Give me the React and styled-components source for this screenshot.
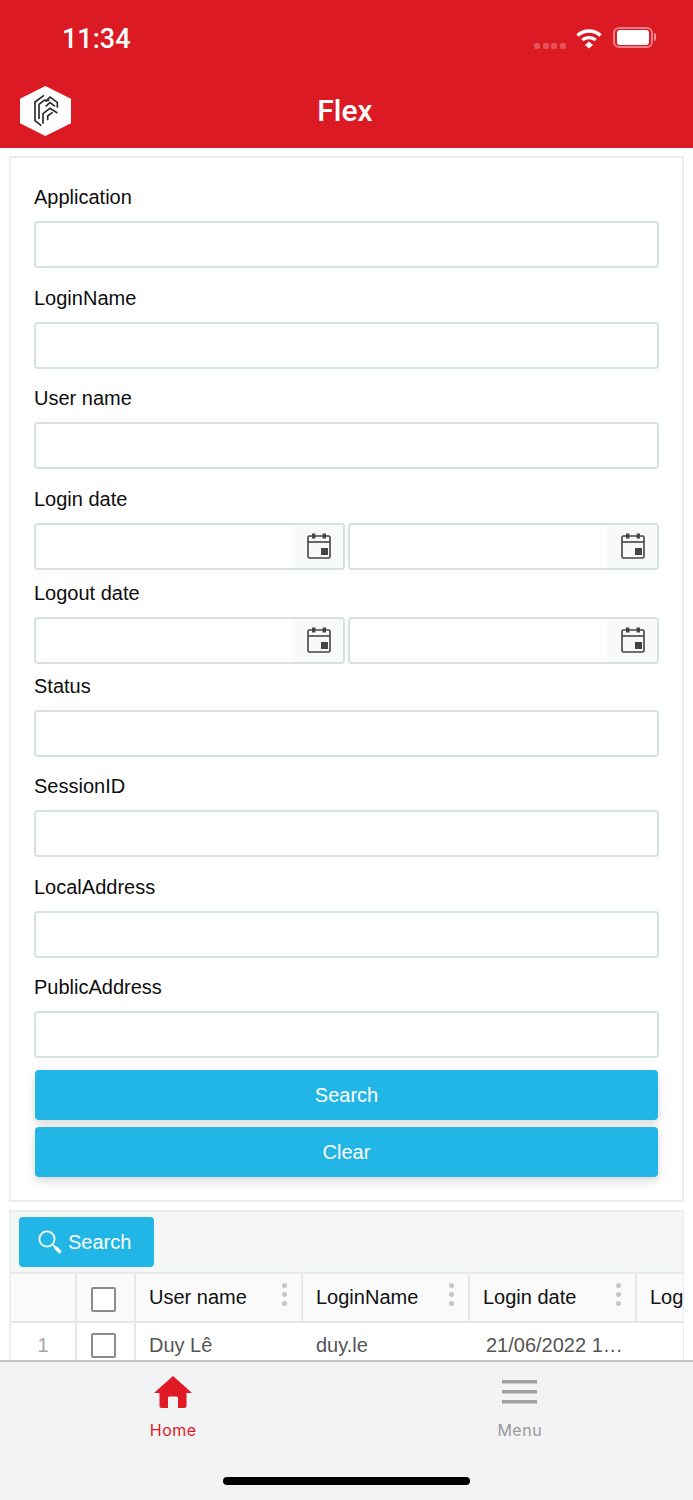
import styled, { createGlobalStyle } from 'styled-components';

const GlobalStyle = createGlobalStyle`
  html, body {
    margin: 0;
    padding: 0;
    background: #fff;
  }
  * {
    box-sizing: border-box;
  }
`;

const FONT = '"Liberation Sans", Arial, sans-serif';

function WifiIcon() {
  return (
    <svg width="28" height="22" viewBox="0 0 28 22" fill="none">
      <path d="M2.5 8.5C9 2.5 19 2.5 25.5 8.5" stroke="#fff" strokeWidth="3.6" />
      <path d="M7.3 13C11 9.8 17 9.8 20.7 13" stroke="#fff" strokeWidth="3.4" />
      <path d="M10 18L14 14.6L18 18L14 21.6Z" fill="#fff" />
    </svg>
  );
}

function BatteryIcon() {
  return (
    <Battery>
      <BatteryFill />
    </Battery>
  );
}

function Logo() {
  return (
    <svg width="51" height="50" viewBox="60 47 153 150">
      <polygon points="136,47 213,85 213,159 136,197 60,159 60,85" fill="#fff" />
      <g fill="none" stroke="#2a2a2e" strokeWidth="5">
        <path d="M124 166L105 151V95L132 75" />
        <path d="M117 146V102L132 90H148" />
        <path d="M137 94L150 80L172 96V112" />
        <path d="M137 108L150 97L165 108" />
        <path d="M129 160V130L150 114L172 128" />
        <path d="M143 150V137L158 126" />
      </g>
    </svg>
  );
}

function CalendarIcon() {
  return (
    <svg width="24" height="26" viewBox="0 0 24 26" fill="none">
      <rect x="1" y="3" width="22" height="22" rx="1.5" stroke="#444" strokeWidth="1.6" />
      <path d="M1 9H23" stroke="#444" strokeWidth="1.6" />
      <rect x="5" y="0.5" width="3.4" height="5" fill="#444" />
      <rect x="15.6" y="0.5" width="3.4" height="5" fill="#444" />
      <rect x="14" y="15" width="7" height="7" fill="#444" />
    </svg>
  );
}

function SearchIcon() {
  return (
    <svg width="24" height="24" viewBox="0 0 24 24" fill="none">
      <circle cx="9" cy="9" r="7.6" stroke="#fff" strokeWidth="1.8" />
      <path d="M15 15L22.5 22.5" stroke="#fff" strokeWidth="1.8" />
      <path d="M17.5 17.5L22.5 22.5" stroke="#fff" strokeWidth="3.4" />
    </svg>
  );
}

function HomeIcon() {
  return (
    <svg width="38" height="32" viewBox="0 0 38 32">
      <path
        d="M19 0L38 17H32.5V30C32.5 31.2 31.7 32 30.5 32H24V22.5C24 21.2 23.4 20.5 22.5 20.5H15.5C14.6 20.5 14 21.2 14 22.5V32H7.5C6.3 32 5.5 31.2 5.5 30V17H0Z"
        fill="#df1a25"
      />
    </svg>
  );
}

function MenuIcon() {
  return (
    <svg width="36" height="26" viewBox="0 0 36 26">
      <rect x="0" y="1" width="35" height="3.5" fill="#a0a0a0" />
      <rect x="0" y="11" width="35" height="3.5" fill="#a0a0a0" />
      <rect x="0" y="21" width="35" height="3.5" fill="#a0a0a0" />
    </svg>
  );
}

function TextField({ label, gap = 17.5 }) {
  return (
    <Field $gap={gap}>
      <Label>{label}</Label>
      <Input />
    </Field>
  );
}

function DateField({ label, gap }) {
  return (
    <Field $gap={gap}>
      <Label>{label}</Label>
      <DateRow>
        <DateBox>
          <DateAddon>
            <CalendarIcon />
          </DateAddon>
        </DateBox>
        <DateBox>
          <DateAddon>
            <CalendarIcon />
          </DateAddon>
        </DateBox>
      </DateRow>
    </Field>
  );
}

function HeaderCell({ width, children }) {
  return (
    <HeadCell $width={width}>
      <HeadText>{children}</HeadText>
      <Dots>
        <i />
        <i />
        <i />
      </Dots>
    </HeadCell>
  );
}

export default function App() {
  return (
    <>
      <GlobalStyle />
      <Screen>
        <Header>
          <StatusBar>
            <Clock>11:34</Clock>
            <StatusIcons>
              <Signal>
                <i />
                <i />
                <i />
                <i />
              </Signal>
              <WifiIcon />
              <BatteryIcon />
            </StatusIcons>
          </StatusBar>
          <NavBar>
            <LogoSlot>
              <Logo />
            </LogoSlot>
            <Title>Flex</Title>
          </NavBar>
        </Header>

        <Content>
          <FormPanel>
            <TextField label="Application" />
            <TextField label="LoginName" />
            <TextField label="User name" />
            <DateField label="Login date" gap={11} />
            <DateField label="Logout date" gap={10} />
            <TextField label="Status" />
            <TextField label="SessionID" />
            <TextField label="LocalAddress" />
            <TextField label="PublicAddress" gap={10.5} />
            <Buttons>
              <PrimaryButton>Search</PrimaryButton>
              <PrimaryButton>Clear</PrimaryButton>
            </Buttons>
          </FormPanel>

          <GridPanel>
            <Toolbar>
              <ToolButton>
                <SearchIcon />
                Search
              </ToolButton>
            </Toolbar>
            <HeadRow>
              <IndexCell />
              <CheckCell>
                <CheckBox />
              </CheckCell>
              <HeaderCell width={167}>User name</HeaderCell>
              <HeaderCell width={167}>LoginName</HeaderCell>
              <HeaderCell width={167}>Login date</HeaderCell>
              <HeadCell $width={167}>
                <HeadText>Logout date</HeadText>
              </HeadCell>
            </HeadRow>
            <BodyRow>
              <IndexCell $body>1</IndexCell>
              <CheckCell $body>
                <CheckBox />
              </CheckCell>
              <BodyCell $width={167}>Duy Lê</BodyCell>
              <BodyCell $width={167}>duy.le</BodyCell>
              <BodyCell $width={167} $date>
                <DateText>21/06/2022 14:20:11</DateText>
              </BodyCell>
            </BodyRow>
          </GridPanel>
        </Content>

        <TabBar>
          <Tabs>
            <Tab $active>
              <TabIcon>
                <HomeIcon />
              </TabIcon>
              Home
            </Tab>
            <Tab>
              <TabIcon>
                <MenuIcon />
              </TabIcon>
              Menu
            </Tab>
          </Tabs>
          <HomeBar />
        </TabBar>
      </Screen>
    </>
  );
}

const Screen = styled.div`
  display: flex;
  flex-direction: column;
  width: 693px;
  height: 1500px;
  overflow: hidden;
  background: #fff;
  font-family: ${FONT};
`;

const Header = styled.header`
  flex: none;
  height: 148px;
  background: #dc1a23;
  color: #fff;
`;

const StatusBar = styled.div`
  display: flex;
  justify-content: space-between;
  align-items: center;
  height: 76px;
  padding: 2px 40px 0 62px;
`;

const Clock = styled.div`
  font-family: Roboto, ${FONT};
  font-size: 27px;
  font-weight: 500;
`;

const StatusIcons = styled.div`
  display: flex;
  align-items: center;
  margin-bottom: 3px;
`;

const Signal = styled.div`
  display: flex;
  gap: 2.6px;
  margin: 17px 9px 0 0;

  i {
    width: 6px;
    height: 6px;
    border-radius: 2px;
    background: rgba(255, 255, 255, 0.25);
  }
`;

const Battery = styled.div`
  position: relative;
  width: 40px;
  height: 21px;
  margin-left: 10px;
  padding: 1px 2px;
  border: 2px solid rgba(255, 255, 255, 0.45);
  border-radius: 6px;

  &::after {
    content: '';
    position: absolute;
    top: 4px;
    right: -5px;
    width: 2px;
    height: 8px;
    border-radius: 0 2px 2px 0;
    background: rgba(255, 255, 255, 0.5);
  }
`;

const BatteryFill = styled.div`
  height: 100%;
  border-radius: 3px;
  background: #fff;
`;

const NavBar = styled.div`
  position: relative;
  display: flex;
  justify-content: center;
  align-items: center;
  height: 68px;
`;

const LogoSlot = styled.div`
  position: absolute;
  top: 10px;
  left: 20px;
  display: flex;
`;

const Title = styled.div`
  margin-left: -3px;
  font-family: Roboto, ${FONT};
  font-size: 30px;
  font-weight: 500;
`;

const Content = styled.main`
  flex: 1;
  min-height: 0;
  overflow: hidden;
  padding: 8px 9px 0;
`;

const FormPanel = styled.section`
  padding: 27px 23px 23px;
  border: 2px solid #eceeee;
`;

const Field = styled.div`
  margin-bottom: ${(props) => props.$gap}px;
`;

const Label = styled.div`
  height: 24px;
  margin-bottom: 12px;
  font-size: 20px;
  line-height: 24px;
  color: #0e0e0e;
`;

const Input = styled.div`
  height: 47px;
  border: 2px solid #d6e1e1;
  border-radius: 4px;
  background: #fff;
`;

const DateRow = styled.div`
  display: grid;
  grid-template-columns: 1fr 1fr;
  gap: 3px;
`;

const DateBox = styled(Input)`
  display: flex;
  justify-content: flex-end;
`;

const DateAddon = styled.div`
  display: flex;
  justify-content: center;
  align-items: center;
  width: 50px;
  padding-left: 2px;
  background: #f8f9f9;
`;

const Buttons = styled.div`
  display: flex;
  flex-direction: column;
  gap: 7px;
  padding: 1.5px 1px 0;
`;

const PrimaryButton = styled.button`
  height: 50px;
  border: 0;
  border-radius: 4px;
  background: #22b6e6;
  box-shadow: 0 4px 10px rgba(0, 0, 0, 0.16);
  color: #fff;
  font-family: ${FONT};
  font-size: 20px;
`;

const GridPanel = styled.section`
  margin-top: 8px;
  border: 2px solid #eceeee;
  border-right-width: 1px;
`;

const Toolbar = styled.div`
  height: 60px;
  padding: 5px 8px;
  background: #f5f6f6;
`;

const ToolButton = styled.button`
  display: flex;
  align-items: center;
  gap: 6px;
  width: 135px;
  height: 50px;
  padding: 0 0 0 19px;
  border: 0;
  border-radius: 4px;
  background: #22b6e6;
  color: #fff;
  font-family: ${FONT};
  font-size: 20px;
`;

const HeadRow = styled.div`
  display: flex;
  height: 51px;
  overflow: hidden;
  border-top: 2px solid #e6e8e8;
  border-bottom: 2px solid #e6e8e8;
  background: #fafafa;
`;

const BodyRow = styled.div`
  display: flex;
  height: 60px;
  overflow: hidden;
`;

const IndexCell = styled.div`
  flex: none;
  width: 66px;
  padding-top: 11px;
  border-right: 2px solid #e6e8e8;
  color: #a5a5a5;
  font-size: 20px;
  text-align: center;
  background: ${(props) => (props.$body ? '#fff' : 'transparent')};
`;

const CheckCell = styled.div`
  display: flex;
  flex: none;
  align-items: ${(props) => (props.$body ? 'flex-start' : 'center')};
  width: 59px;
  padding: ${(props) => (props.$body ? '10px' : '4px')} 0 0 14px;
  border-right: 2px solid #e6e8e8;
`;

const CheckBox = styled.div`
  width: 25px;
  height: 25px;
  border: 2px solid #8c8c8c;
  border-radius: 2px;
  background: #fff;
`;

const HeadCell = styled.div`
  position: relative;
  display: flex;
  flex: none;
  align-items: center;
  width: ${(props) => props.$width}px;
  padding-left: 13px;
  border-right: 2px solid #e6e8e8;
`;

const HeadText = styled.span`
  color: #111;
  font-size: 20px;
  white-space: nowrap;
`;

const Dots = styled.div`
  position: absolute;
  top: 9px;
  right: 14px;
  display: flex;
  flex-direction: column;
  gap: 4px;

  i {
    width: 5px;
    height: 5px;
    border-radius: 50%;
    background: #c6c6c6;
  }
`;

const BodyCell = styled.div`
  flex: none;
  width: ${(props) => props.$width}px;
  padding: 11px 0 0 ${(props) => (props.$date ? '16px' : '13px')};
  color: #555;
  font-size: 20px;
  white-space: nowrap;
`;

const DateText = styled.div`
  width: 138px;
  overflow: hidden;
  text-overflow: ellipsis;
`;

const TabBar = styled.footer`
  flex: none;
  height: 140px;
  border-top: 2px solid #c4c4c4;
  background: #f2f3f5;
`;

const Tabs = styled.div`
  display: grid;
  grid-template-columns: 1fr 1fr;
`;

const Tab = styled.div`
  display: flex;
  flex-direction: column;
  align-items: center;
  padding-top: 14px;
  color: ${(props) => (props.$active ? '#df1a25' : '#9a9a9a')};
  font-family: Inter, ${FONT};
  font-size: 16px;
  letter-spacing: 0.5px;
`;

const TabIcon = styled.div`
  display: flex;
  align-items: center;
  height: 32px;
  margin-bottom: 12px;
`;

const HomeBar = styled.div`
  width: 247px;
  height: 8px;
  margin: 37px auto 0;
  border-radius: 4px;
  background: #000;
`;
